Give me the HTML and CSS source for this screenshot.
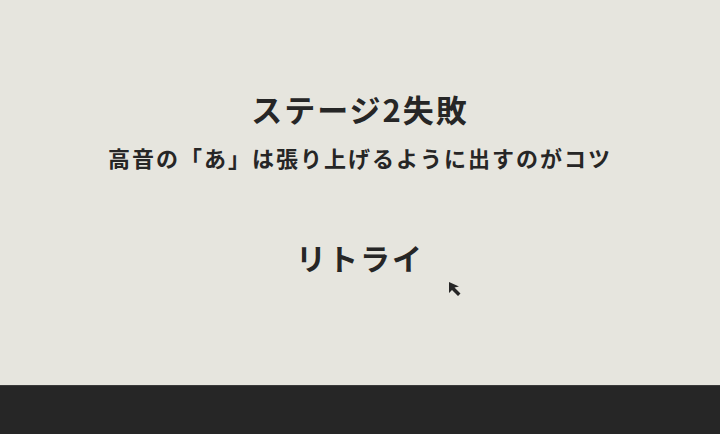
FILE: index.html
```html
<!DOCTYPE html>
<html lang="ja">
<head>
<meta charset="utf-8">
<link rel="stylesheet" href="styles.css">
</head>
<body>
<div class="screen">
  <main class="stage">
    <h1 class="title">ステージ2失敗</h1>
    <p class="hint">高音の「あ」は張り上げるように出すのがコツ</p>
    <button class="retry">リトライ</button>
    <svg class="cursor" width="16" height="16" viewBox="0 0 16 16"><path d="M1 1 L1 12 L4 9 L10 15 L12.5 12.5 L6.5 6.5 L11 5.5 Z" fill="#262626"/></svg>
  </main>
  <footer class="bar"></footer>
</div>
</body>
</html>
```
FILE: styles.css
```css
html, body { margin: 0; padding: 0; }
body { width: 720px; height: 434px; overflow: hidden; background: #e6e5de; font-family: "Noto Sans CJK JP", sans-serif; color: #262626; }
.screen { display: flex; flex-direction: column; height: 434px; }
.stage { position: relative; flex: 1; display: flex; flex-direction: column; align-items: center; padding-top: 86px; box-sizing: border-box; }
.title { margin: 0; font-size: 31px; font-weight: 700; line-height: 46px; letter-spacing: 2px; }
.hint { margin: 11px 0 0; font-size: 22px; font-weight: 700; line-height: 28px; letter-spacing: 2px; }
.retry { margin-top: 64px; background: none; border: none; padding: 0; font-family: inherit; color: inherit; font-size: 30px; font-weight: 700; line-height: 44px; letter-spacing: 2px; }
.cursor { position: absolute; left: 448px; top: 281px; }
.bar { height: 49px; background: #262626; border-top: 1px solid #3a3a3a; box-sizing: border-box; }
```
